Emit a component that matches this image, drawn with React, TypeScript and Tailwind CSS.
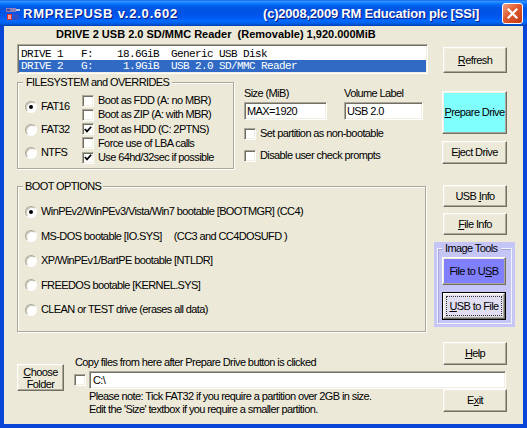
import React from 'react';

const raised =
    'border border-t-white border-l-white border-r-[#716f64] border-b-[#716f64] shadow-[inset_-1px_-1px_0_#aca899,inset_1px_1px_0_#f1efe2]';
const sunken =
    'border border-t-[#aca899] border-l-[#aca899] border-r-white border-b-white shadow-[inset_1px_1px_0_#716f64,inset_-1px_-1px_0_#f1efe2]';
const etched = 'border border-[#aca899] shadow-[inset_1px_1px_0_#fff,1px_1px_0_#fff]';

interface BtnProps {
    children: React.ReactNode;
    className?: string;
}

const Btn = ({ children, className = '' }: BtnProps) => (
    <div className={`${raised} flex items-center justify-center text-center bg-[#ece9d8] ${className}`}>
        {children}
    </div>
);

const Check = ({ checked = false, label }: { checked?: boolean; label: string }) => (
    <div className="flex items-center h-[13px]">
        <div className={`w-[12px] h-[12px] shrink-0 bg-white ${sunken} flex items-center justify-center`}>
            {checked && (
                <svg width="8" height="7" viewBox="0 0 8 7">
                    <path d="M0.8 3 L3 5.4 L7.2 0.8" stroke="#000" strokeWidth="1.7" fill="none" />
                </svg>
            )}
        </div>
        <span className="ml-[4px] whitespace-pre">{label}</span>
    </div>
);

const Radio = ({ checked = false, children }: { checked?: boolean; children: React.ReactNode }) => (
    <div className="flex items-center h-[13px]">
        <div className="w-[12px] h-[12px] shrink-0 rounded-full bg-white border border-t-[#aca899] border-l-[#aca899] border-r-white border-b-white shadow-[inset_1px_1px_0_#c9c6b8] flex items-center justify-center">
            {checked && <div className="w-[4px] h-[4px] rounded-full bg-black" />}
        </div>
        <span className="ml-[4px] whitespace-pre">{children}</span>
    </div>
);

const AppIcon = () => (
    <svg width="16" height="16" viewBox="0 0 16 16">
        <rect x="1" y="3" width="10" height="4" fill="#8a7fb8" />
        <rect x="11" y="4" width="4" height="2" fill="#c8c8d8" />
        <rect x="2" y="4" width="3" height="2" fill="#4a3f8a" />
        <rect x="2" y="9" width="5" height="6" fill="#d43030" />
        <rect x="8" y="9" width="6" height="6" fill="#3050c8" />
        <rect x="3" y="10" width="3" height="4" fill="#f2a0a0" />
    </svg>
);

export default function App() {
    return (
        <div className="w-[527px] h-[428px] flex flex-col font-['Liberation_Sans',Arial,sans-serif] text-[11px] leading-[13px] tracking-[-0.6px] text-black select-none">
            {/* title bar */}
            <div className="h-[26px] shrink-0 flex items-center bg-[linear-gradient(180deg,#0058ee_0%,#3a93ff_4%,#288eff_8%,#127dff_12%,#036ffc_16%,#0262ee_22%,#0057e5_30%,#0054e3_40%,#0055eb_60%,#005bf5_70%,#026afe_80%,#0062ef_88%,#0052d6_94%,#0040ab_100%)]">
                <div className="ml-[5px]">
                    <AppIcon />
                </div>
                <span className="ml-[2px] w-[240px] text-white font-bold text-[13px] tracking-[0.8px] [text-shadow:1px_1px_#0a1883]">
                    RMPREPUSB v.2.0.602
                </span>
                <span className="text-white font-bold text-[13px] tracking-[-0.2px] [text-shadow:1px_1px_#0a1883]">
                    (c)2008,2009 RM Education plc [SSi]
                </span>
                <div className="ml-auto mr-[4px] w-[21px] h-[21px] rounded-[3px] border border-white bg-[linear-gradient(135deg,#f0a080_0%,#e0582e_45%,#c23a12_100%)] flex items-center justify-center">
                    <svg width="11" height="11" viewBox="0 0 11 11">
                        <path d="M1.5 1.5 L9.5 9.5 M9.5 1.5 L1.5 9.5" stroke="#fff" strokeWidth="2.2" strokeLinecap="square" />
                    </svg>
                </div>
            </div>

            {/* client area */}
            <div className="flex-1 flex flex-col bg-[#ece9d8] border-x-4 border-b-4 border-x-[#0846d8] border-b-[#0846d8]">
                <div className="flex">
                    {/* left column */}
                    <div className="ml-[13px] w-[411px] flex flex-col">
                        <div className="mt-[2px] h-[13px] pl-[39px] font-bold whitespace-pre tracking-[0px]">
                            DRIVE 2 USB 2.0 SD/MMC Reader  (Removable) 1,920.000MiB
                        </div>

                        <div className={`mt-[3px] h-[30px] bg-white ${sunken} pt-[3px] font-['Liberation_Mono','Courier_New',monospace] text-[11px] leading-[12px] tracking-[-0.6px]`}>
                            <div className="mx-[1px] pl-[2px] h-[12px] whitespace-pre">DRIVE 1   F:    18.6GiB  Generic USB Disk</div>
                            <div className="mx-[1px] pl-[2px] h-[12px] whitespace-pre bg-[#316ac5] text-white">DRIVE 2   G:     1.9GiB  USB 2.0 SD/MMC Reader</div>
                        </div>

                        <div className="mt-[2px] flex">
                            <fieldset className={`w-[217px] h-[93px] ${etched}`}>
                                <legend className="ml-[5px] px-[3px] bg-[#ece9d8]">FILESYSTEM and OVERRIDES</legend>
                                <div className="flex items-start pl-[7px]">
                                    <div className="w-[57px] h-[59px] mt-[11px] flex flex-col justify-between">
                                        <Radio checked>FAT16</Radio>
                                        <Radio>FAT32</Radio>
                                        <Radio>NTFS</Radio>
                                    </div>
                                    <div className="h-[70px] mt-[5px] flex flex-col justify-between">
                                        <Check label="Boot as FDD (A: no MBR)" />
                                        <Check label="Boot as ZIP (A: with MBR)" />
                                        <Check checked label="Boot as HDD (C: 2PTNS)" />
                                        <Check label="Force use of LBA calls" />
                                        <Check checked label="Use 64hd/32sec if possible" />
                                    </div>
                                </div>
                            </fieldset>

                            <div className="ml-[10px] flex flex-col">
                                <div className="mt-[11px] flex">
                                    <div className="w-[83px]">
                                        <div>Size (MiB)</div>
                                        <div className={`mt-[2px] h-[18px] bg-white ${sunken} pl-[2px] flex items-center`}>MAX=1920</div>
                                    </div>
                                    <div className="ml-[17px] w-[79px]">
                                        <div>Volume Label</div>
                                        <div className={`mt-[2px] h-[18px] bg-white ${sunken} pl-[2px] flex items-center`}>USB 2.0</div>
                                    </div>
                                </div>
                                <div className="mt-[7px]">
                                    <Check label="Set partition as non-bootable" />
                                </div>
                                <div className="mt-[9px]">
                                    <Check label="Disable user check prompts" />
                                </div>
                            </div>
                        </div>

                        <fieldset className={`mt-[11px] w-[409px] h-[152px] ${etched}`}>
                            <legend className="ml-[5px] px-[2px] bg-[#ece9d8]">BOOT OPTIONS</legend>
                            <div className="pl-[7px] pt-[12px] flex flex-col gap-[11.5px]">
                                <Radio checked>WinPEv2/WinPEv3/Vista/Win7 bootable [BOOTMGR] (CC4)</Radio>
                                <Radio>
                                    MS-DOS bootable [IO.SYS]<span className="ml-[12px]">(CC3 and CC4DOSUFD )</span>
                                </Radio>
                                <Radio>XP/WinPEv1/BartPE bootable [NTLDR]</Radio>
                                <Radio>FREEDOS bootable [KERNEL.SYS]</Radio>
                                <Radio>CLEAN or TEST drive (erases all data)</Radio>
                            </div>
                        </fieldset>
                    </div>

                    {/* right column */}
                    <div className="ml-[6px] w-[81px] flex flex-col">
                        <Btn className="mt-[21px] ml-[9px] w-[64px] h-[26px]">
                            <span><u>R</u>efresh</span>
                        </Btn>
                        <Btn className="mt-[18px] ml-[8px] w-[65px] h-[43px] !bg-[#80ffff]">
                            <span><u>P</u>repare Drive</span>
                        </Btn>
                        <Btn className="mt-[7px] ml-[8px] w-[65px] h-[23px]">
                            <span>Eject Drive</span>
                        </Btn>
                        <Btn className="mt-[21px] ml-[9px] w-[64px] h-[22px]">
                            <span>USB <u>I</u>nfo</span>
                        </Btn>
                        <Btn className="mt-[6px] ml-[9px] w-[64px] h-[22px]">
                            <span><u>F</u>ile Info</span>
                        </Btn>

                        <div className="mt-[7px] w-[81px] bg-[#c6c6f6] px-[3px] pb-[3px]">
                            <fieldset className="border border-[#f4f4ff] shadow-[inset_1px_1px_0_#a4a4d8]">
                                <legend className="ml-[4px] px-[3px] leading-[12px] bg-[#c6c6f6]">Image Tools</legend>
                                <div className="pl-[4px] pb-[3px] flex flex-col">
                                    <Btn className="mt-[3px] w-[64px] h-[28px] !bg-[#8080ff]">
                                        <span>File to U<u>S</u>B</span>
                                    </Btn>
                                    <div className="mt-[7px] w-[64px] h-[28px] border border-black">
                                        <div className={`${raised} w-full h-full bg-[#e0def0] p-[2px]`}>
                                            <div className="w-full h-full border border-dotted border-[#333] flex items-center justify-center">
                                                <span><u>U</u>SB to File</span>
                                            </div>
                                        </div>
                                    </div>
                                </div>
                            </fieldset>
                        </div>
                    </div>
                </div>

                {/* bottom area */}
                <div className="mt-[10px] flex">
                    <Btn className="ml-[13px] mt-[22px] w-[47px] h-[27px] flex-col leading-[12px]">
                        <span><u>C</u>hoose</span>
                        <span>Folder</span>
                    </Btn>
                    <div className="ml-[10px] w-[433px] flex flex-col">
                        <div className="h-[23px] flex items-end justify-between">
                            <span className="ml-[1px] -mb-[4px]">Copy files from here after Prepare Drive button is clicked</span>
                            <Btn className="w-[64px] h-[23px]">
                                <span><u>H</u>elp</span>
                            </Btn>
                        </div>
                        <div className="mt-[6px] flex items-center">
                            <div className={`w-[12px] h-[12px] bg-white ${sunken}`} />
                            <div className={`ml-[3px] mr-[1px] flex-1 h-[18px] bg-white ${sunken} pl-[3px] flex items-center`}>C:\</div>
                        </div>
                        <div className="flex justify-between">
                            <div className="ml-[15px] pt-[1px]">
                                <div>Please note: Tick FAT32 if you require a partition over 2GB in size.</div>
                                <div>Edit the 'Size' textbox if you require a smaller partition.</div>
                            </div>
                            <Btn className="w-[64px] h-[23px]">
                                <span>E<u>x</u>it</span>
                            </Btn>
                        </div>
                    </div>
                </div>
            </div>
        </div>
    );
}
